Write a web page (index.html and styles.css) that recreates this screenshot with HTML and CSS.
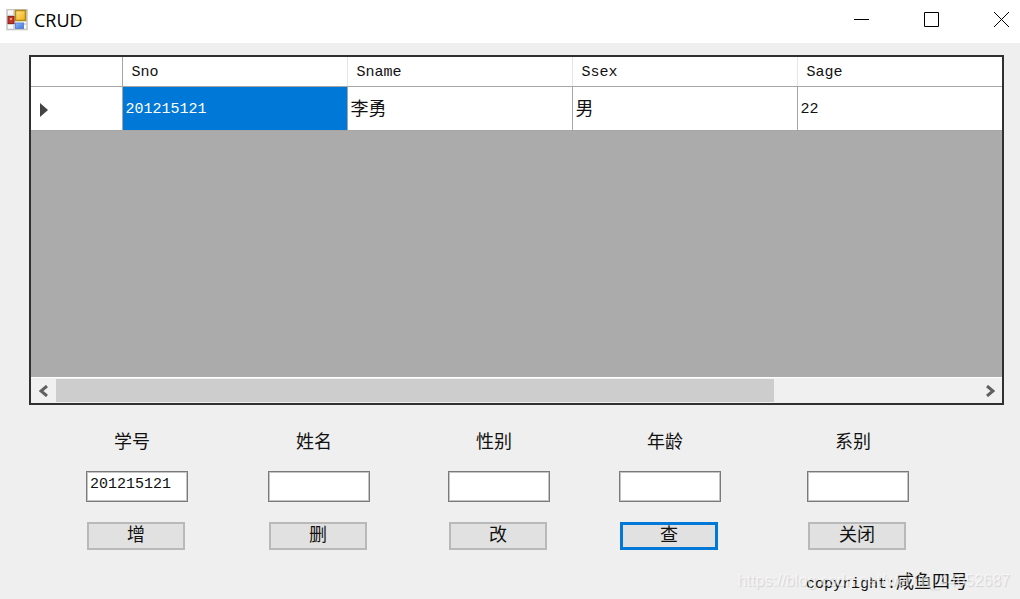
FILE: index.html
```html
<!DOCTYPE html>
<html lang="zh-CN">
<head>
<meta charset="utf-8">
<title>CRUD</title>
<link rel="stylesheet" href="styles.css">
</head>
<body>
<header class="titlebar">
  <svg class="app-icon" width="22" height="22" viewBox="0 0 22 22" aria-hidden="true">
    <defs>
      <linearGradient id="gold" x1="0" y1="0" x2="1" y2="1"><stop offset="0" stop-color="#ffe58a"/><stop offset="1" stop-color="#f0ae10"/></linearGradient>
      <linearGradient id="blue" x1="0" y1="0" x2="1" y2="1"><stop offset="0" stop-color="#8fb8f8"/><stop offset="1" stop-color="#3f74dc"/></linearGradient>
    </defs>
    <rect x="1" y="0.5" width="20" height="20" fill="#fafafa" stroke="#c4c4c4" stroke-width="1.5"/>
    <path d="M8 1v19M1 6.500h7M1 15h19M14 15v5" stroke="#c9c9c9" stroke-width="1.5"/>
    <rect x="9.500" y="1.500" width="10" height="10" fill="url(#gold)" stroke="#b08a14" stroke-width="1.5"/>
    <rect x="2" y="7.500" width="6" height="7" fill="#c4362c" stroke="#8f241c"/>
    <rect x="4" y="9" width="2" height="2" fill="#ef9a90"/>
    <rect x="9.500" y="14" width="8" height="5.500" fill="url(#blue)" stroke="#5b86d8"/>
  </svg>
  <h1 class="title">CRUD</h1>
  <div class="window-controls">
    <button class="window-button" type="button" aria-label="Minimize"><svg width="15" height="15" viewBox="0 0 15 15"><path d="M0 7.500h15"/></svg></button>
    <button class="window-button" type="button" aria-label="Maximize"><svg width="15" height="15" viewBox="0 0 15 15"><path d="M.5.5h14v14H.5z"/></svg></button>
    <button class="window-button" type="button" aria-label="Close"><svg width="15" height="15" viewBox="0 0 15 15"><path d="M0 0l15 15M15 0L0 15"/></svg></button>
  </div>
</header>
<main class="content">
  <section class="data-grid">
    <table class="records">
      <thead>
        <tr><th class="row-head"></th><th>Sno</th><th>Sname</th><th>Ssex</th><th>Sage</th></tr>
      </thead>
      <tbody>
        <tr>
          <th class="row-head" scope="row" aria-label="Current row"><svg width="10" height="16" viewBox="0 0 10 16"><path d="M1 1l8 7-8 7z" fill="#444"/></svg></th>
          <td class="selected">201215121</td><td>李勇</td><td>男</td><td>22</td>
        </tr>
      </tbody>
    </table>
    <div class="scrollbar">
      <button class="scroll-button" type="button" aria-label="Scroll left"><svg width="10" height="12" viewBox="0 0 10 12"><path d="M8 1L2 6l6 5"/></svg></button>
      <div class="track"><div class="thumb"></div></div>
      <button class="scroll-button" type="button" aria-label="Scroll right"><svg width="10" height="12" viewBox="0 0 10 12"><path d="M2 1l6 5-6 5"/></svg></button>
    </div>
  </section>
  <form class="fields">
    <div class="field"><label for="sno">学号</label><input id="sno" type="text" value="201215121"><button type="button">增</button></div>
    <div class="field"><label for="sname">姓名</label><input id="sname" type="text"><button type="button">删</button></div>
    <div class="field"><label for="ssex">性别</label><input id="ssex" type="text"><button type="button">改</button></div>
    <div class="field"><label for="sage">年龄</label><input id="sage" type="text"><button class="default" type="button">查</button></div>
    <div class="field"><label for="sdept">系别</label><input id="sdept" type="text"><button type="button">关闭</button></div>
  </form>
  <footer class="copyright">copyright:<span class="author">咸鱼四号</span></footer>
</main>
<div class="watermark">https://blog.csdn.net/weixin_44652687</div>
</body>
</html>
```
FILE: styles.css
```css
* {
  box-sizing: border-box;
}

body {
  margin: 0;
  min-height: 100vh;
  display: flex;
  flex-direction: column;
  position: relative;
  background: #efefef;
  color: #111;
  font: 18px/24px "Liberation Mono", "Noto Sans CJK SC", monospace;
}

button,
input {
  margin: 0;
  font: inherit;
  color: inherit;
  border-radius: 0;
}

svg {
  display: block;
}

.titlebar {
  display: flex;
  align-items: center;
  height: 43px;
  padding: 0 11px 4px 6px;
  background: #fff;
}

.title {
  margin: 0 auto 0 6px;
  color: #000;
  font: 18px/24px "Open Sans", "Noto Sans", sans-serif;
}

.window-controls {
  display: flex;
  gap: 55px;
}

.window-button {
  padding: 0;
  border: 0;
  background: none;
}

.window-button path {
  fill: none;
  stroke: #000;
}

.content {
  flex: 1;
  display: flex;
  flex-direction: column;
  padding: 12px 16px 2px 29px;
}

.data-grid {
  flex: 1;
  display: flex;
  flex-direction: column;
  border: 2px solid #303030;
  background: #ababab;
}

.records {
  width: 100%;
  table-layout: fixed;
  border-collapse: collapse;
  background: #fff;
}

.records th,
.records td {
  padding: 4px 3px 0;
  border-right: 1px solid #a6a6a6;
  border-bottom: 1px solid #a6a6a6;
  text-align: left;
  font-weight: 400;
}

.records th:last-child,
.records td:last-child {
  border-right: 0;
}

.records thead th {
  height: 29px;
  padding: 3px 9px 0;
  border-right-color: #e5e5e5;
  font-size: 15px;
}

.records tbody td {
  height: 44px;
}

.records .selected,
.records td:last-child {
  font-size: 15px;
}

.records .row-head {
  width: 91px;
  padding-left: 8px;
  border-right-color: #a6a6a6;
}

.records th:nth-child(n+2):nth-child(-n+4) {
  width: 225px;
}

.records .selected {
  background: #0078d7;
  color: #fff;
}

.scrollbar {
  display: flex;
  height: 26px;
  margin-top: auto;
  padding: 1px 0;
  border-top: 1px solid #fff;
  background: #f0f0f0;
}

.scroll-button {
  width: 25px;
  padding: 0;
  border: 0;
  background: none;
  display: flex;
  align-items: center;
  justify-content: center;
}

.scroll-button path {
  fill: none;
  stroke: #606060;
  stroke-width: 3;
}

.track {
  flex: 1;
  display: flex;
}

.thumb {
  width: 78%;
  background: #cdcdcd;
}

.fields {
  display: grid;
  grid-template-columns: 182fr 180fr 171fr 188fr 197fr;
  padding: 26px 0 21px 57px;
}

.field {
  display: flex;
  flex-direction: column;
  align-items: flex-start;
}

.field label {
  padding-left: 28px;
}

.field input {
  width: 102px;
  height: 31px;
  margin: 16px 0 20px;
  padding: 0 3px 4px;
  border: 1px solid #7a7a7a;
  box-shadow: inset 0 0 0 1px #c4c4c4;
  background: #fff;
  font-size: 15px;
}

.field button {
  width: 98px;
  height: 28px;
  margin-left: 1px;
  padding: 0;
  border: 2px solid #b9b9b9;
  background: #e1e1e1;
  line-height: 24px;
}

.field .default {
  border: 3px solid #0078d7;
  line-height: 22px;
}

.copyright {
  padding-right: 36px;
  text-align: right;
  font-size: 15px;
}

.author {
  font-size: 18px;
}

.watermark {
  position: absolute;
  right: 10px;
  bottom: 8px;
  color: rgba(255, 255, 255, 0.6);
  font: 16px/20px "Liberation Sans", Arial, sans-serif;
  text-shadow: 1px 1px 1px rgba(0, 0, 0, 0.12);
}
```
